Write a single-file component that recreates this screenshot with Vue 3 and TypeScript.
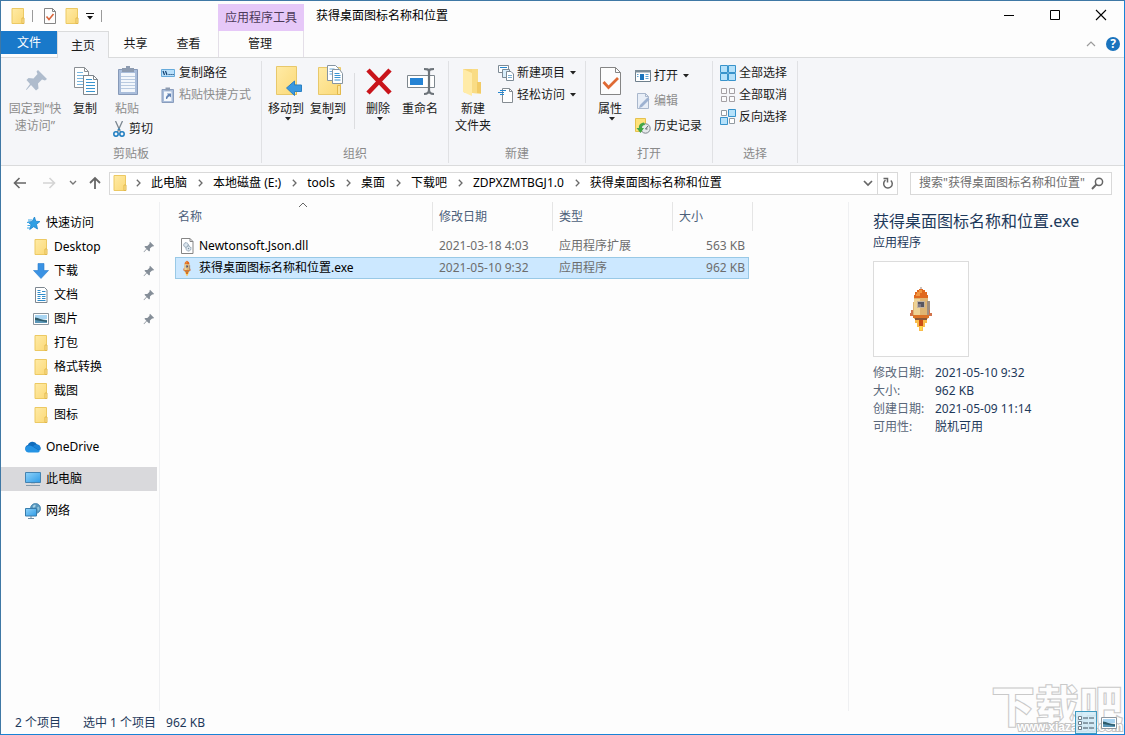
<script setup lang="ts">
import { ref } from 'vue'

interface Crumb { label: string }
interface NavItem { label: string; icon: string; level: number; pinned?: boolean; gap?: boolean }
interface FileRow { name: string; icon: string; date: string; type: string; size: string }

const title = '获得桌面图标名称和位置'
const tabs = ['主页', '共享', '查看']

const crumbs: Crumb[] = [
  { label: '此电脑' },
  { label: '本地磁盘 (E:)' },
  { label: 'tools' },
  { label: '桌面' },
  { label: '下载吧' },
  { label: 'ZDPXZMTBGJ1.0' },
  { label: title },
]

const navItems: NavItem[] = [
  { label: '快速访问', icon: 'star', level: 0 },
  { label: 'Desktop', icon: 'folder', level: 1, pinned: true },
  { label: '下载', icon: 'download', level: 1, pinned: true },
  { label: '文档', icon: 'document', level: 1, pinned: true },
  { label: '图片', icon: 'picture', level: 1, pinned: true },
  { label: '打包', icon: 'folder', level: 1 },
  { label: '格式转换', icon: 'folder', level: 1 },
  { label: '截图', icon: 'folder', level: 1 },
  { label: '图标', icon: 'folder', level: 1 },
  { label: 'OneDrive', icon: 'cloud', level: 0, gap: true },
  { label: '此电脑', icon: 'computer', level: 0, gap: true },
  { label: '网络', icon: 'network', level: 0, gap: true },
]
const activeNav = ref(10)

const files: FileRow[] = [
  { name: 'Newtonsoft.Json.dll', icon: 'dll', date: '2021-03-18 4:03', type: '应用程序扩展', size: '563 KB' },
  { name: '获得桌面图标名称和位置.exe', icon: 'rocket', date: '2021-05-10 9:32', type: '应用程序', size: '962 KB' },
]
const selected = ref(1)

const details = [
  { key: '修改日期:', value: '2021-05-10 9:32' },
  { key: '大小:', value: '962 KB' },
  { key: '创建日期:', value: '2021-05-09 11:14' },
  { key: '可用性:', value: '脱机可用' },
]
const query = ref('')
</script>

<template>
  <div class="window">
    <svg class="defs" aria-hidden="true">
      <defs>
        <linearGradient id="gFolder" x1="0" y1="0" x2="1" y2="1">
          <stop offset="0" stop-color="#ffeba6" /><stop offset="1" stop-color="#fbd978" />
        </linearGradient>
        <linearGradient id="gScreen" x1="0" y1="0" x2="1" y2="1">
          <stop offset="0" stop-color="#8fd3fa" /><stop offset="1" stop-color="#2f9be6" />
        </linearGradient>
      </defs>
      <symbol id="folder" viewBox="0 0 16 16">
        <path d="M2 .5h11.500v15H2z" fill="url(#gFolder)" stroke="#ecc963" />
        <path d="M12 10h2v5.500h-2z" fill="#fce49a" stroke="#e3b94c" />
      </symbol>
      <symbol id="props" viewBox="0 0 12 16">
        <path d="M.5.5h8l3 3v12H.5z" fill="#fdfdfd" stroke="#858585" />
        <path d="M8.500.5v3h3" fill="none" stroke="#858585" />
        <path d="M2.500 8.500l2.500 3 4.500-5.500" fill="none" stroke="#d9653b" stroke-width="1.600" />
      </symbol>
      <symbol id="star" viewBox="0 0 16 16">
        <path d="M9.500 2l1.200 4.200 4.200.4-3.400 2.700 1 4.700-3.800-2.300-4 2.800 1.400-4.700-3.200-2.800 4.200-.4z" fill="#2f9fe4" stroke="#1c83cc" stroke-width=".8" />
        <path d="M3 5h4M2 7.500h3M2.500 10.500h3M2 13h3" stroke="#3da7e6" />
      </symbol>
      <symbol id="download" viewBox="0 0 16 16">
        <path d="M5 .5h6v7h4.500L8 15.500.5 7.500H5z" fill="#3a92e3" stroke="#2a7dcc" stroke-width=".6" />
      </symbol>
      <symbol id="document" viewBox="0 0 16 16">
        <path d="M2.500.5h9l2.500 2.500v12.500H2.500z" fill="#fff" stroke="#7d8790" />
        <path d="M4.500 3.500h3M4.500 5.500h3M9 4.500h3.500M4.500 7.500h8M4.500 9.500h3M9 9.500h3.500M4.500 11.500h3M9 11.500h3.500M4.500 13.500h8" stroke="#2f8cca" />
      </symbol>
      <symbol id="picture" viewBox="0 0 16 16">
        <path d="M.5 2.500h15v11H.5z" fill="#fff" stroke="#8c969e" />
        <path d="M2 4h12v4H2z" fill="#a9d5f2" /><path d="M2 7l4 1 8 1v3H2z" fill="#5b97b8" />
        <path d="M2 6.500c4 0 6 3 12 3V11L2 9z" fill="#2f5b69" />
      </symbol>
      <symbol id="cloud" viewBox="0 0 16 16">
        <path d="M3.500 12.500a3.300 3.300 0 0 1-.6-6.500A5 5 0 0 1 12 5.500a3.600 3.600 0 0 1 .7 7z" fill="#0f6cbd" />
        <path d="M3.500 13.500a3.300 3.300 0 0 1-2.500-5.500c2-1.500 3.500-2 6-.8l7.800 4.700a2.800 2.800 0 0 1-2.300 1.600z" fill="#2593e4" />
        <path d="M8 7.500a4 4 0 0 1 5-1.700 3.700 3.700 0 0 1 2 5.800z" fill="#1a82d6" />
      </symbol>
      <symbol id="computer" viewBox="0 0 16 16">
        <path d="M.5 1.500h15v10H.5z" fill="url(#gScreen)" stroke="#4483b1" />
        <path d="M6 12h4v1H6z" fill="#b9c6d0" /><path d="M1 14.500h14" stroke="#8297a8" />
      </symbol>
      <symbol id="network" viewBox="0 0 16 16">
        <circle cx="10.500" cy="5.500" r="5" fill="#5797be" stroke="#3f7fa9" stroke-width=".8" />
        <path d="M7.500 3l2.500-1.500.8 1.500-2 2z" fill="#a9d3e6" /><path d="M12 4.500l2-1 .5 3-1.500 1.500z" fill="#8fc2da" />
        <path d="M.5 5.500h11v7.500H.5z" fill="url(#gScreen)" stroke="#387cab" />
        <path d="M3 15.500h6M6 13v2" stroke="#6d8ca4" />
      </symbol>
      <symbol id="pin" viewBox="0 0 12 12">
        <path d="M7 .8l4.200 4.200-1.300.6-.8-.2L6.900 7.600l.1 2-.9.9-2.300-2.300L1 11.200l-.4-.4 2.800-3-2-2 .9-.9 2 .1 2.300-2.300-.2-.8z" fill="#858e98" />
      </symbol>
      <symbol id="dll" viewBox="0 0 14 16">
        <path d="M1.500.5h8.500l3 3v12H1.500z" fill="#fff" stroke="#858585" />
        <path d="M10 .5v3h3" fill="none" stroke="#858585" />
        <circle cx="6" cy="7" r="2.300" fill="#dce6ee" stroke="#7c91a3" stroke-dasharray="1.200 .5" />
        <circle cx="8.500" cy="10.500" r="2.500" fill="#dce6ee" stroke="#7c91a3" stroke-dasharray="1.200 .5" />
        <circle cx="8.500" cy="10.500" r=".7" fill="#7c91a3" />
      </symbol>
      <symbol id="rocket" viewBox="0 0 22 46">
        <path d="M10 1h2v4h-2z" fill="#c9c2bf" />
        <path d="M9 3h4v1h2v2h2v3h1v4H4V9h1V6h2V4h2z" fill="#e0691f" />
        <path d="M9 4h3v3h-2v3H6V8h1V6h2z" fill="#f29640" />
        <path d="M4 12h14v4h1v15h-1v2H4v-2H3V16h1z" fill="#dfb573" />
        <path d="M4 13h6v17H4z" fill="#efd396" /><path d="M17 15h3v15h-3z" fill="#a08f80" />
        <path d="M7 15h8v7H7z" fill="#c3b3a0" /><path d="M8 16h6v5H8z" fill="#575560" /><path d="M8 18h3v3H8z" fill="#807b88" />
        <path d="M1 24h2v6H0v-3h1zM19 24h1v3h2v3h-3z" fill="#d2744c" />
        <path d="M3 29h16v3H3z" fill="#db7328" /><path d="M5 32h12v2H5z" fill="#8a5638" />
        <path d="M5 34h12v3h-2v4h-2v4H9v-4H7v-4H5z" fill="#f9bc4a" />
        <path d="M9 34h4v6H9z" fill="#cc4e16" /><path d="M10 40h2v4h-2z" fill="#ffdb4a" />
      </symbol>
      <symbol id="caret" viewBox="0 0 6 4"><path d="M0 0h6L3 3.500z" fill="#222" /></symbol>
      <symbol id="chev" viewBox="0 0 5 8"><path d="M.8.8L4 4 .8 7.200" fill="none" stroke="#6a6a6a" stroke-width="1.300" /></symbol>
    </svg>

    <header class="titlebar">
      <div class="qat">
        <svg class="i16"><use href="#folder" /></svg>
        <span class="bar"></span>
        <button class="plain" type="button" aria-label="属性"><svg width="12" height="16"><use href="#props" /></svg></button>
        <button class="plain" type="button" aria-label="新建文件夹"><svg class="i16"><use href="#folder" /></svg></button>
        <button class="plain more" type="button" aria-label="自定义快速访问工具栏">
          <svg width="8" height="7" viewBox="0 0 8 7"><path d="M0 .5h8" stroke="#111" /><path d="M1 3h6L4 6.500z" fill="#111" /></svg>
        </button>
        <span class="bar"></span>
      </div>
      <div class="context">应用程序工具</div>
      <h1>{{ title }}</h1>
      <div class="controls">
        <button type="button" aria-label="最小化"><svg width="12" height="12" viewBox="0 0 12 12"><path d="M1 6.500h10" stroke="#000" /></svg></button>
        <button type="button" aria-label="最大化"><svg width="12" height="12" viewBox="0 0 12 12"><path d="M1.500 1.500h9v9h-9z" fill="none" stroke="#000" /></svg></button>
        <button type="button" aria-label="关闭"><svg width="12" height="12" viewBox="0 0 12 12"><path d="M1 1l10 10M11 1L1 11" stroke="#000" stroke-width="1.100" /></svg></button>
      </div>
    </header>

    <nav class="tabs">
      <button class="file" type="button">文件</button>
      <button v-for="(t, i) in tabs" :key="t" type="button" class="tab" :class="{ on: i === 0 }">{{ t }}</button>
      <button class="manage" type="button">管理</button>
      <div class="help">
        <button class="plain" type="button" aria-label="折叠功能区"><svg width="10" height="6" viewBox="0 0 10 6"><path d="M1 5l4-4 4 4" fill="none" stroke="#9b9b9b" stroke-width="1.200" /></svg></button>
        <button class="plain q" type="button" aria-label="帮助">?</button>
      </div>
    </nav>

    <section class="ribbon">
      <div class="group clip">
        <div class="tools">
          <button class="big wide" type="button" disabled>
            <svg class="i32" viewBox="0 0 32 32"><path d="M19 5l9 9-2 1.500-3-1-4 4 .5 5-2.500 2-5-5.500L7.500 25 7 24.500l4-5.500-3.500-4 2-2 5 .5 4-4.500-1-2.500z" fill="#afbccd" /></svg>
            <span>固定到“快<br>速访问”</span>
          </button>
          <button class="big" type="button">
            <svg class="i32" viewBox="-1 0 32 32">
              <path d="M4.500 2.500h10l4 4v16h-14z" fill="#fff" stroke="#8a8f94" /><path d="M14.500 2.500v4h4" fill="none" stroke="#8a8f94" />
              <path d="M7 7.500h6M7 10.500h9M7 13.500h9M7 16.500h9M7 19.500h9" stroke="#79b6df" />
              <path d="M13.500 10.500h10l4 4v15h-14z" fill="#fff" stroke="#7d858c" /><path d="M23.500 10.500v4h4" fill="none" stroke="#7d858c" />
              <path d="M16 14.500h6M16 17.500h9M16 20.500h9M16 23.500h9M16 26.500h9" stroke="#3995d0" />
            </svg>
            <span>复制</span>
          </button>
          <div class="stack">
            <button class="big" type="button" disabled>
              <svg class="i32" viewBox="0 0 32 32">
                <path d="M7.500 4.500h19v25h-19z" fill="#a9bddb" stroke="#8699b8" /><path d="M10 8h14v19H10z" fill="#f3f7fc" />
                <path d="M10 11.500h14M10 14.500h14M10 17.500h14M10 20.500h14M10 23.500h14" stroke="#bacbe1" />
                <path d="M11 3h4V1h4v2h4v4H11z" fill="#8d9bb0" />
              </svg>
              <span>粘贴</span>
            </button>
            <button class="small cut" type="button">
              <svg class="i16" viewBox="0 0 16 16"><path d="M4.500 0l5 11M11.500 0l-5 11" stroke="#7c8791" stroke-width="1.300" /><path d="M6.800 9L8 7.500 9.200 9" stroke="#1f82c2" fill="none" /><circle cx="5" cy="13" r="2.200" fill="none" stroke="#1d7cc0" stroke-width="1.500" /><circle cx="11" cy="13" r="2.200" fill="none" stroke="#1d7cc0" stroke-width="1.500" /></svg>
              <span>剪切</span>
            </button>
          </div>
          <div class="col">
            <button class="small" type="button">
              <svg class="i16" viewBox="0 0 16 16"><path d="M1.500 4.500h13v7h-13z" fill="#b9e0fb" stroke="#66aadb" /><path d="M3 6l1.500 4M5.500 6L7 10" stroke="#123f70" stroke-width="1.200" /><path d="M8.500 9.500h1.200M10.500 9.500h1.200M12.500 9.500h1.200" stroke="#123f70" /></svg>
              <span>复制路径</span>
            </button>
            <button class="small" type="button" disabled>
              <svg class="i16" viewBox="0 0 16 16"><path d="M2 2.500h11.500v13H2z" fill="#a9bddb" stroke="#8a9dbd" /><path d="M4 4.500h7.500V14H4z" fill="#f5f8fc" /><path d="M5.500.5h4.500v3H5.500z" fill="#8d9bb0" /><path d="M6 12c-.3-2 .5-3.500 2-4L7 6.500h4v4L9.700 9.200C8 9.800 7.300 10.800 7.200 12z" fill="#6283b4" /></svg>
              <span>粘贴快捷方式</span>
            </button>
          </div>
        </div>
        <div class="label">剪贴板</div>
      </div>

      <div class="group org">
        <div class="tools">
          <button class="big" type="button">
            <svg class="i32" viewBox="0 0 32 32"><path d="M6.500 1.500h20v28h-20z" fill="url(#gFolder)" stroke="#e8c86b" /><path d="M23.500 19.500h3v10h-3z" fill="#fce49a" stroke="#e3b94c" /><path d="M16.500 23l8-7v4h7v6.500h-7v4z" fill="#3a98e0" stroke="#2b81c4" /></svg>
            <span>移动到</span><svg class="caret"><use href="#caret" /></svg>
          </button>
          <button class="big" type="button">
            <svg class="i32" viewBox="0 0 32 32"><path d="M6.500 2.500h22v27h-22z" fill="url(#gFolder)" stroke="#e8c86b" /><path d="M25.500 20.500h3v9h-3z" fill="#fce49a" stroke="#e3b94c" /><path d="M15.500.5h8l3 3v12h-11z" fill="#fff" stroke="#8795a1" /><path d="M17.500 4h5M17.500 6.500h7M17.500 9h7" stroke="#6bade0" /><path d="M20.500 4.500h7l3 4v10h-10z" fill="#fff" stroke="#8795a1" /><path d="M22.500 8.500h5M22.500 10.500h6M22.500 12.500h6M22.500 15h6" stroke="#3a95d2" /></svg>
            <span>复制到</span><svg class="caret"><use href="#caret" /></svg>
          </button>
          <i class="split"></i>
          <button class="big" type="button">
            <svg class="i32" viewBox="0 0 32 32"><path d="M6 5l22 23M28 5L6 28" stroke="#c9141b" stroke-width="4.600" /></svg>
            <span>删除</span><svg class="caret"><use href="#caret" /></svg>
          </button>
          <button class="big" type="button">
            <svg class="i32" viewBox="0 0 32 32"><path d="M3.500 10.500h27v12h-27z" fill="#fff" stroke="#7e878e" /><path d="M6 13h13v7H6z" fill="#2583d4" /><path d="M20 4c3 0 5 0 5 3v18c0 3-2 4-5 4M30 4c-3 0-5 0-5 3v18c0 3 2 4 5 4" fill="none" stroke="#6c7379" stroke-width="2.200" /></svg>
            <span>重命名</span>
          </button>
        </div>
        <div class="label">组织</div>
      </div>

      <div class="group new">
        <div class="tools">
          <button class="big" type="button">
            <svg class="i32" viewBox="0 0 32 32"><path d="M6 4h14v24H8l-2-2z" fill="#f7d77e" /><path d="M6 4l9 4v23l-9-4z" fill="#ffeba8" /><path d="M15 8V4h6v15h3v10l-9-1z" fill="#f9dc85" /><path d="M20 17h4v11h-4z" fill="#f2cb66" /></svg>
            <span>新建<br>文件夹</span>
          </button>
          <div class="col">
            <button class="small" type="button">
              <svg class="i16" viewBox="0 0 16 16"><path d="M.5.5h10v7H.5z" fill="#fff" stroke="#7d8a95" /><path d="M2 2h7v1H2z" fill="#2787ce" /><path d="M4.500 4.500h7v8h-7z" fill="#d9edf9" stroke="#7d8a95" /><path d="M8.500 6.500h4.500l2.500 2.500v6.500h-7z" fill="#fff" stroke="#7d8a95" /><path d="M10 10.500h4M10 12.500h4" stroke="#7baed0" /></svg>
              <span>新建项目</span><svg class="caret"><use href="#caret" /></svg>
            </button>
            <button class="small" type="button">
              <svg class="i16" viewBox="0 0 16 16"><path d="M4.500 1.500h7l3 3v11h-10z" fill="#fff" stroke="#858c92" /><path d="M11.500 1.500v3h3" fill="none" stroke="#858c92" /><path d="M2 3.500h6M0 5.500h6M2 7.500h4" stroke="#2787ce" stroke-width="1.200" /></svg>
              <span>轻松访问</span><svg class="caret"><use href="#caret" /></svg>
            </button>
          </div>
        </div>
        <div class="label">新建</div>
      </div>

      <div class="group open">
        <div class="tools">
          <button class="big" type="button">
            <svg class="i32" viewBox="0 0 32 32"><path d="M6.500 2.500h15l5 5v22h-20z" fill="#fdfdfd" stroke="#858585" /><path d="M21.500 2.500v5h5" fill="none" stroke="#858585" /><path d="M9.500 17l5 5.500L24 13" fill="none" stroke="#df6a34" stroke-width="2.800" /></svg>
            <span>属性</span><svg class="caret"><use href="#caret" /></svg>
          </button>
          <div class="col loose">
            <button class="small" type="button">
              <svg class="i16" viewBox="0 0 16 16"><path d="M.5 2.500h15v11H.5z" fill="#fff" stroke="#6e7f8c" /><path d="M0 2h16v2.500H0z" fill="#7b8d99" /><path d="M5 6h4v6H5z" fill="#1a74bd" /><path d="M10.500 6.500h3M10.500 8.500h3M10.500 10.500h3M2 6.500h1.500M2 8.500h1.500" stroke="#5da3d3" /></svg>
              <span>打开</span><svg class="caret"><use href="#caret" /></svg>
            </button>
            <button class="small" type="button" disabled>
              <svg class="i16" viewBox="0 0 16 16"><path d="M2.500.5h8l3 3v12h-11z" fill="#e8eef7" stroke="#a9b7cc" /><path d="M10.500.5v3h3" fill="none" stroke="#a9b7cc" /><path d="M5 12l7.500-7.500 2 2L7 14l-3 1z" fill="#9eb2d1" /></svg>
              <span>编辑</span>
            </button>
            <button class="small" type="button">
              <svg class="i16" viewBox="0 0 16 16"><path d="M.5.5h10v13H.5z" fill="#ffe27b" stroke="#e5c14e" /><circle cx="10.500" cy="10.500" r="4.700" fill="#e6e9eb" stroke="#7c858c" /><path d="M10.500 11l2.500-3M10.500 11h2" stroke="#5b646b" /><path d="M9 4.500C5 5 3.500 7.500 4 10H1.500l4 5 3.500-5H7c0-2 1-3 3-3z" fill="#43a747" /></svg>
              <span>历史记录</span>
            </button>
          </div>
        </div>
        <div class="label">打开</div>
      </div>

      <div class="group pick">
        <div class="tools">
          <div class="col">
            <button class="small" type="button">
              <svg class="i16" viewBox="0 0 16 16"><path d="M.5.5h7v7h-7zM8.500.5h7v7h-7zM.5 8.500h7v7h-7zM8.500 8.500h7v7h-7z" fill="#b5e1fa" stroke="#3893cb" /></svg>
              <span>全部选择</span>
            </button>
            <button class="small" type="button">
              <svg class="i16" viewBox="0 0 16 16"><path d="M1.500 1.500h5v5h-5zM9.500 1.500h5v5h-5zM1.500 9.500h5v5h-5zM9.500 9.500h5v5h-5z" fill="#fbfbfc" stroke="#a4a0a4" /></svg>
              <span>全部取消</span>
            </button>
            <button class="small" type="button">
              <svg class="i16" viewBox="0 0 16 16"><path d="M1.500 1.500h5v5h-5zM9.500 9.500h5v5h-5z" fill="#fff" stroke="#929aa1" /><path d="M8.500.5h7v7h-7zM.5 8.500h7v7h-7z" fill="#b5e1fa" stroke="#3893cb" /></svg>
              <span>反向选择</span>
            </button>
          </div>
        </div>
        <div class="label">选择</div>
      </div>
    </section>

    <div class="navrow">
      <div class="arrows">
        <button class="plain" type="button" aria-label="后退"><svg width="14" height="12" viewBox="0 0 14 12"><path d="M13 6H1.500M6.500 1l-5 5 5 5" fill="none" stroke="#666" stroke-width="1.600" /></svg></button>
        <button class="plain" type="button" aria-label="前进"><svg width="14" height="12" viewBox="0 0 14 12"><path d="M1 6h11.500M7.500 1l5 5-5 5" fill="none" stroke="#d4d4d4" stroke-width="1.600" /></svg></button>
        <button class="plain" type="button" aria-label="最近浏览的位置"><svg width="8" height="6" viewBox="0 0 8 6"><path d="M1 1l3 3 3-3" fill="none" stroke="#777" stroke-width="1.400" /></svg></button>
        <button class="plain" type="button" aria-label="上移"><svg width="14" height="14" viewBox="0 0 14 14"><path d="M7 13V2M2 7l5-5 5 5" fill="none" stroke="#666" stroke-width="1.800" /></svg></button>
      </div>
      <div class="address">
        <svg class="i16"><use href="#folder" /></svg>
        <template v-for="c in crumbs" :key="c.label">
          <svg class="sep" viewBox="0 0 5 8"><use href="#chev" /></svg>
          <button class="plain crumb" type="button">{{ c.label }}</button>
        </template>
        <button class="plain drop" type="button" aria-label="以前的位置"><svg width="10" height="7" viewBox="0 0 10 7"><path d="M1 1l4 4 4-4" fill="none" stroke="#666" stroke-width="1.700" /></svg></button>
        <button class="plain refresh" type="button" aria-label="刷新"><svg width="12" height="13" viewBox="0 0 12 13"><path d="M8.800 3.500a4.300 4.300 0 1 1-5.300-.3" fill="none" stroke="#666" stroke-width="1.500" /><path d="M1.500 1.500h4v4" fill="none" stroke="#666" stroke-width="1.500" /></svg></button>
      </div>
      <label class="search">
        <input v-model="query" type="text" aria-label="搜索" placeholder="搜索&quot;获得桌面图标名称和位置&quot;">
        <svg width="13" height="13" viewBox="0 0 13 13"><circle cx="8" cy="4.800" r="3.600" fill="none" stroke="#666" stroke-width="1.500" /><path d="M5.300 7.500L1 12" stroke="#666" stroke-width="1.900" /></svg>
      </label>
    </div>

    <main class="body">
      <nav class="tree">
        <button
          v-for="(n, i) in navItems" :key="i" type="button"
          :class="['node', 'level' + n.level, { gap: n.gap, active: i === activeNav }]"
          @click="activeNav = i"
        >
          <svg class="i16"><use :href="'#' + n.icon" /></svg>
          <span>{{ n.label }}</span>
          <svg v-if="n.pinned" class="pin"><use href="#pin" /></svg>
        </button>
      </nav>

      <section class="list">
        <table>
          <colgroup><col class="c-name"><col class="c-mid"><col class="c-mid"><col class="c-size"><col class="c-end"></colgroup>
          <thead>
            <tr>
              <th>名称<svg class="sort" viewBox="0 0 10 6"><path d="M1 5l4-4 4 4" fill="none" stroke="#666" /></svg></th>
              <th>修改日期</th><th>类型</th><th colspan="2">大小</th>
            </tr>
          </thead>
          <tbody>
            <tr v-for="(f, i) in files" :key="f.name" :class="{ sel: i === selected }" @click="selected = i">
              <td class="name"><div><svg width="14" height="16"><use :href="'#' + f.icon" /></svg>{{ f.name }}</div></td>
              <td>{{ f.date }}</td><td>{{ f.type }}</td><td class="size">{{ f.size }}</td><td class="end"></td>
            </tr>
          </tbody>
        </table>
      </section>

      <aside class="info">
        <h2>获得桌面图标名称和位置.exe</h2>
        <p>应用程序</p>
        <div class="thumb"><svg width="22" height="46"><use href="#rocket" /></svg></div>
        <dl>
          <template v-for="d in details" :key="d.key"><dt>{{ d.key }}</dt><dd>{{ d.value }}</dd></template>
        </dl>
      </aside>
    </main>

    <footer class="status">
      <span>2 个项目</span>
      <span class="chosen">选中 1 个项目</span>
      <span>962 KB</span>
      <div class="views">
        <button class="view on" type="button" aria-label="详细信息">
          <svg width="18" height="16" viewBox="0 0 18 16"><path d="M1.500 1.500h3v3h-3zM1.500 6.500h3v3h-3zM1.500 11.500h3v3h-3z" fill="#fff" stroke="#6f7f8b" /><path d="M6 3h5M12 3h5M6 8h5M12 8h5M6 13h5M12 13h5" stroke="#40535f" /></svg>
        </button>
        <button class="view" type="button" aria-label="大缩略图"><svg class="i16"><use href="#picture" /></svg></button>
      </div>
    </footer>

    <div class="mark" aria-hidden="true"><b>下载吧</b><small>www.xiazaiba.com</small></div>
  </div>
</template>

<style>
body { margin: 0; background: #fff; }
</style>

<style scoped>
.window {
  position: relative;
  box-sizing: border-box;
  min-height: 100vh;
  display: flex;
  flex-direction: column;
  overflow: hidden;
  border: 1px solid #1883d7;
  border-top-color: #3f78a5;
  border-left-color: #3f78a5;
  background: #fdfdfd;
  color: #1a1a1a;
  font: 12px/16px "Noto Sans", "Noto Sans CJK SC", sans-serif;
}
.defs { position: absolute; width: 0; height: 0; }
svg { display: block; flex: none; }
button { font: inherit; color: inherit; background: none; border: 0; padding: 0; margin: 0; white-space: nowrap; }
.i16 { width: 16px; height: 16px; }
.i32 { width: 32px; height: 32px; }
.caret { width: 6px; height: 4px; }

.titlebar { display: flex; height: 30px; }
.qat { display: flex; align-items: center; width: 217px; box-sizing: border-box; padding-left: 9px; }
.qat .bar { width: 1px; height: 12px; background: #9a9a9a; margin: 0 11px 0 6px; }
.qat .plain + .plain { margin-left: 8px; }
.qat .more + .bar { margin-left: 7px; }
.qat .plain.more { margin-left: 6px; }
.context { width: 86px; margin-top: 3px; line-height: 27px; text-align: center; background: #e6c8f8; color: #4c3a58; }
h1 { flex: 1; margin: 0; padding-left: 12px; font-size: 12px; font-weight: 400; line-height: 29px; color: #000; }
.controls { display: flex; }
.controls button { width: 46px; height: 28px; display: grid; place-items: center; }

.tabs { display: flex; height: 27px; border-bottom: 1px solid #dadbdc; box-sizing: border-box; }
.tabs button { line-height: 24px; }
.file { width: 56px; height: 23px; background: #1979ca; color: #fff; }
.tabs .tab { width: 53px; }
.tabs .on { width: 52px; height: 27px; box-sizing: border-box; border: 1px solid #dadbdc; border-bottom: 0; background: #f5f6f9; line-height: 21px; }
.tabs .manage { width: 86px; margin-left: 3px; padding-right: 2px; box-sizing: border-box; border: solid #e4dfe8; border-width: 0 1px; }
.help { margin-left: auto; display: flex; align-items: center; gap: 10px; padding-right: 4px; }
.tabs .q { width: 14px; height: 14px; line-height: 14px; border-radius: 50%; background: #1a73bd; color: #fff; font-weight: 700; }

.ribbon { display: flex; height: 107px; background: #f5f6f9; border-bottom: 1px solid #dadbdc; }
.group { display: flex; flex-direction: column; margin: 3px 0 2px; border-right: 1px solid #e0e1e4; box-sizing: border-box; }
.clip { width: 261px; }
.org { width: 187px; }
.new { width: 137px; }
.open { width: 127px; }
.pick { width: 85px; }
.tools { flex: 1; display: flex; align-items: flex-start; padding-top: 4px; }
.label { height: 17px; line-height: 16px; text-align: center; color: #8a8a8a; }
.big { width: 42px; display: flex; flex-direction: column; align-items: center; line-height: 17px; }
.big .i32 { margin-bottom: 3px; }
.big .caret { margin-left: 4px; }
.clip .tools { padding-left: 3px; }
.clip .big { width: 38px; }
.clip .big.wide { width: 62px; }
.stack { display: flex; flex-direction: column; align-items: flex-start; width: 51px; }
.stack .big { margin-left: 4px; }
.small { height: 22px; display: flex; align-items: center; gap: 3px; }
.small .caret { margin-left: 2px; }
.cut { margin: 1px 0 0 7px; gap: 2px; }
.col { margin-top: -4px; padding-top: 1px; }
.clip .col { padding-left: 5px; }
.loose { padding-top: 2px; }
.loose .small { height: 25px; }
button:disabled { color: #8d8d8d; }
.org .tools { padding-left: 3px; }
.split { width: 1px; height: 56px; margin: 8px 2px 0 5px; background: #dcdde0; }
.new .tools { padding-left: 3px; }
.new .col { padding-left: 4px; }
.open .tools { padding-left: 3px; }
.open .col { padding-left: 4px; }
.pick .tools { padding-left: 7px; }

.navrow { display: flex; align-items: center; height: 34px; padding-right: 12px; }
.arrows { display: flex; align-items: center; width: 108px; box-sizing: border-box; padding-left: 12px; gap: 15px; }
.arrows .plain:nth-child(3) { margin-left: -2px; }
.arrows .plain:last-child { margin-left: -4px; }
.address { flex: 1; min-width: 0; display: flex; align-items: center; height: 23px; box-sizing: border-box; border: 1px solid #d9d9d9; padding-left: 2px; background: #fff; color: #000; }
.sep { width: 5px; height: 8px; margin: 0 10px 0 11px; }
.address .i16 + .sep { margin-left: 8px; }
.drop { margin-left: auto; padding: 0 4px; }
.refresh { width: 20px; height: 21px; display: grid; place-items: center; border-left: 1px solid #d9d9d9; }
.search { display: flex; align-items: center; width: 202px; height: 23px; box-sizing: border-box; margin-left: 12px; padding: 0 7px 0 8px; border: 1px solid #d9d9d9; background: #fff; }
.search input { flex: 1; min-width: 0; border: 0; padding: 0; outline: 0; background: none; font: inherit; color: #333; }
.search input::placeholder { color: #6d6d6d; opacity: 1; }

.body { flex: 1; display: flex; padding-top: 2px; }
.tree { width: 158px; flex: none; border-right: 1px solid #eff0f2; padding-top: 9px; color: #000; }
.node { display: flex; align-items: center; gap: 5px; width: 156px; height: 24px; padding-left: 24px; text-align: left; }
.level1 { padding-left: 32px; }
.node.gap { margin-top: 8px; }
.active { background: #d9d9dc; }
.pin { width: 12px; height: 12px; margin: 0 2px 0 auto; }

.list { flex: 1; padding-left: 15px; }
table { table-layout: fixed; width: 578px; border-collapse: separate; border-spacing: 0; }
.c-name { width: 258px; }
.c-mid { width: 120px; }
.c-size { width: 76px; }
.c-end { width: 4px; }
th { height: 29px; padding: 0 0 0 6px; position: relative; text-align: left; font-weight: 400; color: #4c607a; border-right: 1px solid #e5e5e5; }
th:first-child { padding-left: 3px; }
.sort { position: absolute; left: 123px; top: 0; width: 10px; height: 6px; }
tbody::before { content: ""; display: block; height: 4px; }
td { height: 20px; padding: 0 0 0 6px; border: 1px solid transparent; border-width: 1px 0; color: #6d6d6d; }
td.name { color: #000; border-left-width: 1px; padding-left: 4px; }
.name div { display: flex; align-items: center; gap: 5px; }
td.size { text-align: right; padding: 0 3px 0 0; border-right-width: 1px; }
td.end { padding: 0; }
.sel td:not(.end) { background: #cce8ff; border-color: #99c9e6; }

.info { width: 251px; flex: none; border-left: 1px solid #eff0f2; padding: 8px 0 0 24px; color: #1e395b; }
.info h2 { margin: 0; font-size: 16px; font-weight: 400; line-height: 22px; }
.info p { margin: 3px 0 10px; }
.thumb { width: 94px; height: 94px; display: grid; place-items: center; border: 1px solid #dcdcdc; background: #fff; }
dl { display: grid; grid-template-columns: 62px auto; margin: 7px 0 0; line-height: 18px; }
dt { color: #5a6779; }
dd { margin: 0; }

.status { position: relative; z-index: 1; display: flex; align-items: center; height: 23px; padding-left: 14px; color: #1e395b; }
.chosen { margin: 0 10px 0 22px; }
.views { margin-left: auto; display: flex; gap: 3px; padding-right: 7px; }
.view { width: 17px; height: 23px; display: grid; place-items: center; }
.view.on { width: 22px; box-sizing: border-box; border: 1px solid #3f9abf; background: #cbe9f6cc; }

.mark { position: absolute; right: 1px; bottom: 0; text-align: right; }
.mark b { display: block; padding-bottom: 2px; font: 900 44px/56px "Noto Sans CJK SC", sans-serif; color: #fdfdfd; -webkit-text-stroke: 1px #c9c9c9; }
.mark small { position: absolute; right: 0; bottom: 0; font: 700 12px/14px "Liberation Sans", sans-serif; color: #fff; -webkit-text-stroke: 2px #c4c4c4; paint-order: stroke; }
</style>
